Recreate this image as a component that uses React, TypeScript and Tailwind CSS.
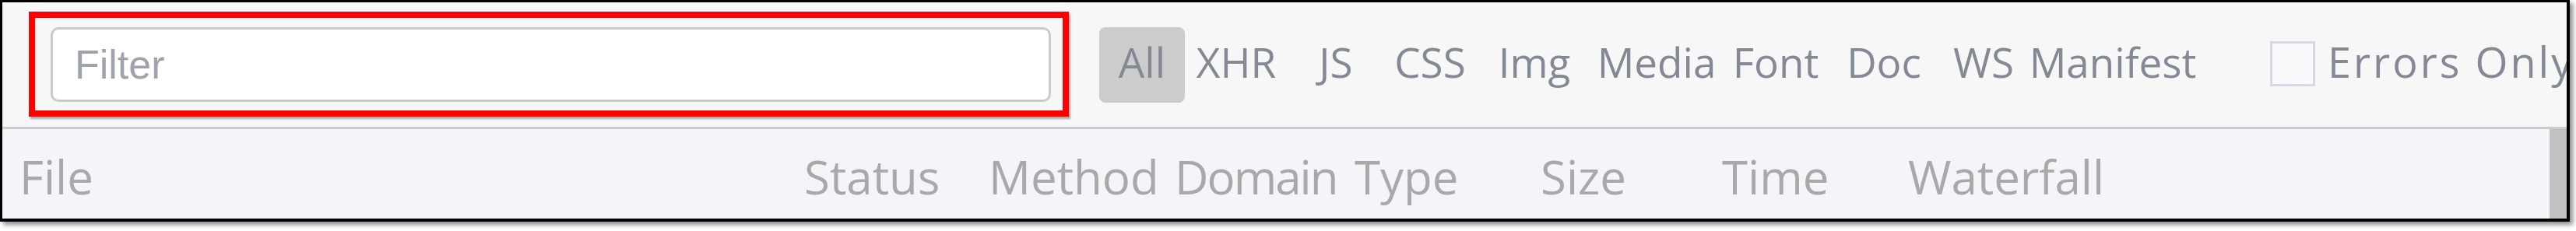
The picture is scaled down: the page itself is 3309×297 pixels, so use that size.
import { useState } from "react";

// fixed button widths, taken from the toolbar in the screenshot
const filters = [
  { label: "All", width: "w-[110px]" },
  { label: "XHR", width: "w-[132px]" },
  { label: "JS", width: "w-[124px]" },
  { label: "CSS", width: "w-[118px]" },
  { label: "Img", width: "w-[150px]" },
  { label: "Media", width: "w-[164px]" },
  { label: "Font", width: "w-[142px]" },
  { label: "Doc", width: "w-[136px]" },
  { label: "WS", width: "w-[120px]" },
  { label: "Manifest", width: "w-[212px]" },
];

const columns = [
  { name: "File", width: "w-[1008px]", extra: "" },
  { name: "Status", width: "w-[237px]", extra: "" },
  { name: "Method", width: "w-[239px]", extra: "" },
  { name: "Domain", width: "w-[231px]", extra: "tracking-[-2px]" },
  { name: "Type", width: "w-[239px]", extra: "" },
  { name: "Size", width: "w-[233px]", extra: "" },
  { name: "Time", width: "w-[239px]", extra: "" },
  { name: "Waterfall", width: "w-[300px]", extra: "" },
];

function Toolbar() {
  const [active, setActive] = useState("All");
  const [errorsOnly, setErrorsOnly] = useState(false);

  return (
    <div className="h-[160px] bg-[#f7f7f7] flex items-start pl-[34px] pt-[12px] shrink-0">
      {/* highlighted filter box */}
      <div className="w-[1336px] h-[135px] border-8 border-[#ff0000] pl-[20px] pr-[15px] pt-[12px] shadow-[2px_3px_2px_rgba(0,0,0,0.3)] shrink-0">
        <input
          className="w-full h-[96px] bg-white border-[3px] border-[#cacaca] rounded-[10px] pl-[28px] outline-none text-[52px] font-['Liberation_Sans',Arial,sans-serif] placeholder:text-[#9fa3ab]"
          placeholder="Filter"
        />
      </div>

      <div className="flex items-center ml-[39px] mt-[20px] h-[97px]">
        {filters.map((f) => (
          <button
            key={f.label}
            onClick={() => setActive(f.label)}
            className={`${f.width} h-[97px] pb-[8px] flex items-center justify-center shrink-0 rounded-[8px] text-[53px] leading-none whitespace-nowrap text-[#838a94] font-['Open_Sans',sans-serif] ${
              active === f.label ? "bg-[#cccccc]" : ""
            }`}
          >
            {f.label}
          </button>
        ))}
      </div>

      <label className="flex items-center ml-[96px] mt-[37px] gap-[16px] cursor-pointer">
        <span
          onClick={() => setErrorsOnly(!errorsOnly)}
          className="w-[58px] h-[58px] border-[3px] border-[#d5d9e4] bg-[#fafafa] shrink-0"
        />
        <span className="pb-[6px] text-[54px] leading-none tracking-[3px] text-[#838a94] font-['Open_Sans',sans-serif] whitespace-nowrap">
          Errors Only
        </span>
      </label>
    </div>
  );
}

function HeaderRow() {
  return (
    <div className="flex-1 flex bg-[#f4f5f9]">
      <div className="flex-1 flex items-center pl-[22px] pt-[6px] overflow-hidden">
        {columns.map((c) => (
          <div
            key={c.name}
            className={`${c.width} ${c.extra} shrink-0 text-[60px] leading-none text-[#a9a9a9] font-['Open_Sans',sans-serif] whitespace-nowrap`}
          >
            {c.name}
          </div>
        ))}
      </div>
      <div className="w-[22px] bg-[#c1c1c1] shrink-0" />
    </div>
  );
}

export default function App() {
  return (
    <div className="w-[3309px] h-[297px] bg-white">
      <div className="w-[3301px] h-[285px] border-black border-l-[3px] border-t-[3px] border-r-4 border-b-4 shadow-[4px_4px_6px_rgba(0,0,0,0.45)] flex flex-col overflow-hidden">
        <Toolbar />
        <div className="h-[3px] bg-[#cccccc] shrink-0" />
        <HeaderRow />
      </div>
    </div>
  );
}
